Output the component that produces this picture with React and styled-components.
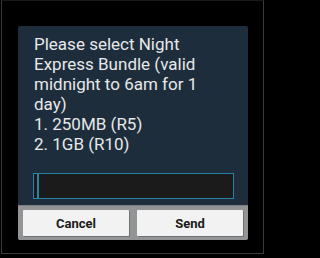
import styled, { createGlobalStyle } from 'styled-components'

const GlobalStyle = createGlobalStyle`
  html, body {
    margin: 0;
    padding: 0;
    background: #000000;
  }
`

const Screen = styled.div`
  box-sizing: border-box;
  width: 263px;
  height: 254px;
  margin-left: 1px;
  padding: 25px 0 0 16px;
  border: 1px solid #3a3a3a;
  border-top-color: #1a1a1a;
  background: #000000;
`

const Dialog = styled.div`
  width: 230px;
  border-radius: 2px;
  overflow: hidden;
  background: #1e2d3b;
`

const Body = styled.div`
  padding: 8px 14px 7px 15px;
`

const Message = styled.div`
  padding-left: 1px;
  font-family: Roboto, 'Noto Sans', sans-serif;
  font-size: 17px;
  line-height: 20px;
  color: #e6e8ea;
`

const Line = styled.div`
  white-space: nowrap;
`

const Input = styled.div`
  box-sizing: border-box;
  display: flex;
  height: 26px;
  margin-top: 19px;
  padding: 0 0 0 3px;
  border: 1px solid #2a82a6;
  background: #1b1b1b;
`

const Caret = styled.div`
  width: 2px;
  background: #2a82a6;
`

const ButtonBar = styled.div`
  display: flex;
  gap: 8px;
  padding: 4px 5px;
  background: #929496;
  border-top: 1px solid #7d8083;
  margin-top: -1px;
`

const Button = styled.button`
  flex: 1;
  height: 26px;
  padding: 0;
  border: none;
  border-radius: 1px;
  background: #f2f2f2;
  box-shadow: 1px 1px 0 #6f7173;
  font-family: Roboto, 'Noto Sans', sans-serif;
  font-size: 13px;
  font-weight: 700;
  color: #1a1a1a;
`

export default function App() {
  return (
    <>
      <GlobalStyle />
      <Screen>
        <Dialog>
          <Body>
            <Message>
              <Line>Please select Night</Line>
              <Line>Express Bundle (valid</Line>
              <Line>midnight to 6am for 1</Line>
              <Line>day)</Line>
              <Line>1. 250MB (R5)</Line>
              <Line>2. 1GB (R10)</Line>
            </Message>
            <Input>
              <Caret />
            </Input>
          </Body>
          <ButtonBar>
            <Button>Cancel</Button>
            <Button>Send</Button>
          </ButtonBar>
        </Dialog>
      </Screen>
    </>
  )
}
